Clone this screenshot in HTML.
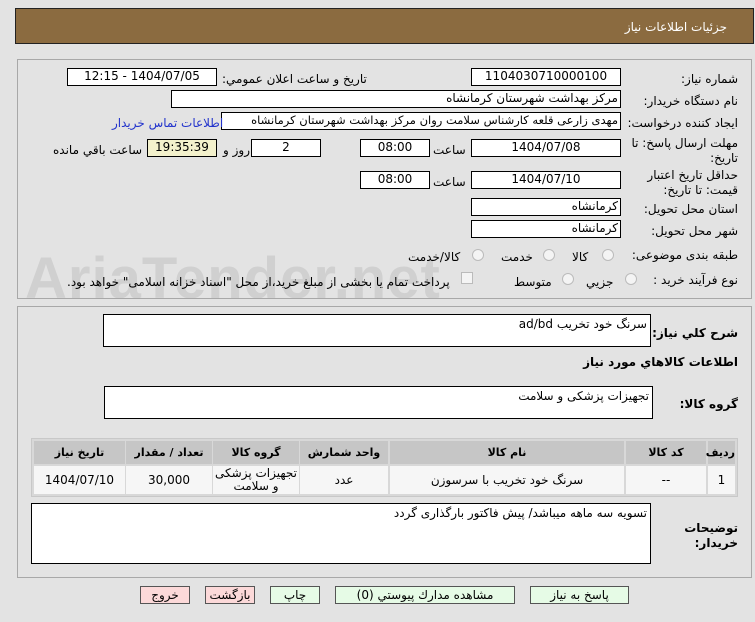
<!DOCTYPE html>
<html><head><meta charset="utf-8"><style>
body{margin:0;width:755px;height:622px;background:#e3e3e3;font-family:"DejaVu Sans","Liberation Sans",sans-serif;font-size:12px;color:#000;position:relative;overflow:hidden}
.a{position:absolute}
.b{position:absolute;background:#fff;border:1px solid #000;box-sizing:border-box;text-align:center;line-height:15px;direction:rtl;white-space:nowrap;overflow:hidden;height:18px}
.l{position:absolute;direction:rtl;white-space:nowrap;line-height:15px}
.p{position:absolute;border:1px solid #a8a8a8;box-sizing:border-box}
.r{position:absolute;width:12px;height:12px;border-radius:50%;border:1px solid #bbb;background:#f4f4f4;box-sizing:border-box}
.btn{position:absolute;top:586px;height:18px;border:1px solid #555;box-sizing:border-box;text-align:center;line-height:16px;direction:rtl;white-space:nowrap}
.c{position:absolute;text-align:center;direction:rtl;box-sizing:border-box}
.h{background:#c6c6c6;top:441px;height:23px;line-height:23px;font-weight:bold;font-size:11px}
.d{background:#f6f6f6;top:466px;height:28px;line-height:28px}
.ta{position:absolute;background:#fff;border:1px solid #000;box-sizing:border-box;direction:rtl;text-align:right;padding:2px 3px;line-height:15px}
</style></head><body>
<div class="a" style="left:15px;top:8px;width:739px;height:36px;background:#8b6b40;border:1px solid #222;box-sizing:border-box"></div>
<div class="l" style="right:28px;top:20px;color:#fff">جزئيات اطلاعات نياز</div>

<div class="a" style="left:25px;top:245px;font-size:58px;font-weight:bold;color:#d0d0d0;letter-spacing:1px;font-family:'Liberation Sans',sans-serif">AriaTender.net</div>

<div class="p" style="left:17px;top:59px;width:735px;height:240px"></div>
<div class="p" style="left:17px;top:306px;width:735px;height:272px"></div>

<div class="l" style="right:17px;top:72px">شماره نياز:</div>
<div class="b" style="left:471px;top:68px;width:150px">1104030710000100</div>
<div class="l" style="left:222px;top:72px">تاريخ و ساعت اعلان عمومي:</div>
<div class="b" style="left:67px;top:68px;width:150px">1404/07/05 - 12:15</div>

<div class="l" style="right:17px;top:94px">نام دستگاه خريدار:</div>
<div class="b" style="left:171px;top:90px;width:450px;text-align:right;padding-right:2px">مركز بهداشت شهرستان كرمانشاه</div>

<div class="l" style="right:17px;top:116px">ايجاد كننده درخواست:</div>
<div class="b" style="left:221px;top:112px;width:400px;text-align:right;padding-right:2px;font-size:11.5px">مهدی  زارعی قلعه کارشناس سلامت روان مرکز بهداشت شهرستان کرمانشاه</div>
<div class="l" style="left:112px;top:116px;color:#2233cc">اطلاعات تماس خريدار</div>

<div class="l" style="right:17px;top:136px">مهلت ارسال پاسخ: تا</div>
<div class="l" style="right:17px;top:151px">تاريخ:</div>
<div class="b" style="left:471px;top:139px;width:150px">1404/07/08</div>
<div class="l" style="left:433px;top:143px">ساعت</div>
<div class="b" style="left:360px;top:139px;width:70px">08:00</div>
<div class="b" style="left:251px;top:139px;width:70px">2</div>
<div class="l" style="left:223px;top:143px">روز و</div>
<div class="b" style="left:147px;top:139px;width:70px;background:#f3f1cc">19:35:39</div>
<div class="l" style="left:53px;top:143px">ساعت باقي مانده</div>

<div class="l" style="right:17px;top:168px">حداقل تاريخ اعتبار</div>
<div class="l" style="right:17px;top:183px">قيمت: تا تاريخ:</div>
<div class="b" style="left:471px;top:171px;width:150px">1404/07/10</div>
<div class="l" style="left:433px;top:175px">ساعت</div>
<div class="b" style="left:360px;top:171px;width:70px">08:00</div>

<div class="l" style="right:17px;top:202px">استان محل تحويل:</div>
<div class="b" style="left:471px;top:198px;width:150px;text-align:right;padding-right:2px">كرمانشاه</div>
<div class="l" style="right:17px;top:224px">شهر محل تحويل:</div>
<div class="b" style="left:471px;top:220px;width:150px;text-align:right;padding-right:2px">كرمانشاه</div>

<div class="l" style="right:17px;top:248px">طبقه بندی موضوعی:</div>
<div class="r" style="left:602px;top:249px"></div>
<div class="l" style="left:572px;top:250px">كالا</div>
<div class="r" style="left:543px;top:249px"></div>
<div class="l" style="left:501px;top:250px">خدمت</div>
<div class="r" style="left:472px;top:249px"></div>
<div class="l" style="left:408px;top:250px">كالا/خدمت</div>

<div class="l" style="right:17px;top:273px">نوع فرآيند خريد :</div>
<div class="r" style="left:625px;top:273px"></div>
<div class="l" style="left:586px;top:275px">جزيي</div>
<div class="r" style="left:562px;top:273px"></div>
<div class="l" style="left:514px;top:275px">متوسط</div>
<div class="a" style="left:461px;top:272px;width:12px;height:12px;border:1px solid #bbb;background:#f4f4f4;box-sizing:border-box"></div>
<div class="l" style="left:67px;top:275px">پرداخت تمام يا بخشی از مبلغ خريد،از محل "اسناد خزانه اسلامی" خواهد بود.</div>

<div class="l" style="right:17px;top:326px;font-weight:bold">شرح كلي نياز:</div>
<div class="ta" style="left:103px;top:314px;width:548px;height:33px">سرنگ خود تخریب ad/bd</div>
<div class="l" style="right:17px;top:355px;font-weight:bold">اطلاعات كالاهاي مورد نياز</div>
<div class="l" style="right:17px;top:397px;font-weight:bold">گروه كالا:</div>
<div class="ta" style="left:104px;top:386px;width:549px;height:33px">تجهيزات پزشكی و سلامت</div>

<div class="a" style="left:31px;top:438px;width:707px;height:59px;background:#d8d8d8;border:1px solid #c8c8c8;box-sizing:border-box"></div>
<div class="c h" style="left:708px;width:27px">رديف</div>
<div class="c h" style="left:626px;width:80px">كد كالا</div>
<div class="c h" style="left:390px;width:234px">نام كالا</div>
<div class="c h" style="left:300px;width:88px">واحد شمارش</div>
<div class="c h" style="left:213px;width:86px">گروه كالا</div>
<div class="c h" style="left:126px;width:86px">تعداد / مقدار</div>
<div class="c h" style="left:34px;width:91px">تاريخ نياز</div>
<div class="c d" style="left:708px;width:27px">1</div>
<div class="c d" style="left:626px;width:80px">--</div>
<div class="c d" style="left:390px;width:234px">سرنگ خود تخريب با سرسوزن</div>
<div class="c d" style="left:300px;width:88px">عدد</div>
<div class="c d" style="left:213px;width:86px;line-height:13px;padding-top:1px">تجهيزات پزشكی و سلامت</div>
<div class="c d" style="left:126px;width:86px">30,000</div>
<div class="c d" style="left:34px;width:91px">1404/07/10</div>

<div class="l" style="right:17px;top:521px;font-weight:bold">توضيحات</div>
<div class="l" style="right:17px;top:536px;font-weight:bold">خريدار:</div>
<div class="ta" style="left:31px;top:503px;width:620px;height:61px">تسويه سه ماهه ميباشد/ پيش فاكتور بارگذاری گردد</div>

<div class="btn" style="left:140px;width:50px;background:#fcd9d9">خروج</div>
<div class="btn" style="left:205px;width:50px;background:#fcd9d9">بازگشت</div>
<div class="btn" style="left:270px;width:50px;background:#e6fbe6">چاپ</div>
<div class="btn" style="left:335px;width:180px;background:#e6fbe6">مشاهده مدارك پيوستي (0)</div>
<div class="btn" style="left:530px;width:99px;background:#e6fbe6">پاسخ به نياز</div>
</body></html>
